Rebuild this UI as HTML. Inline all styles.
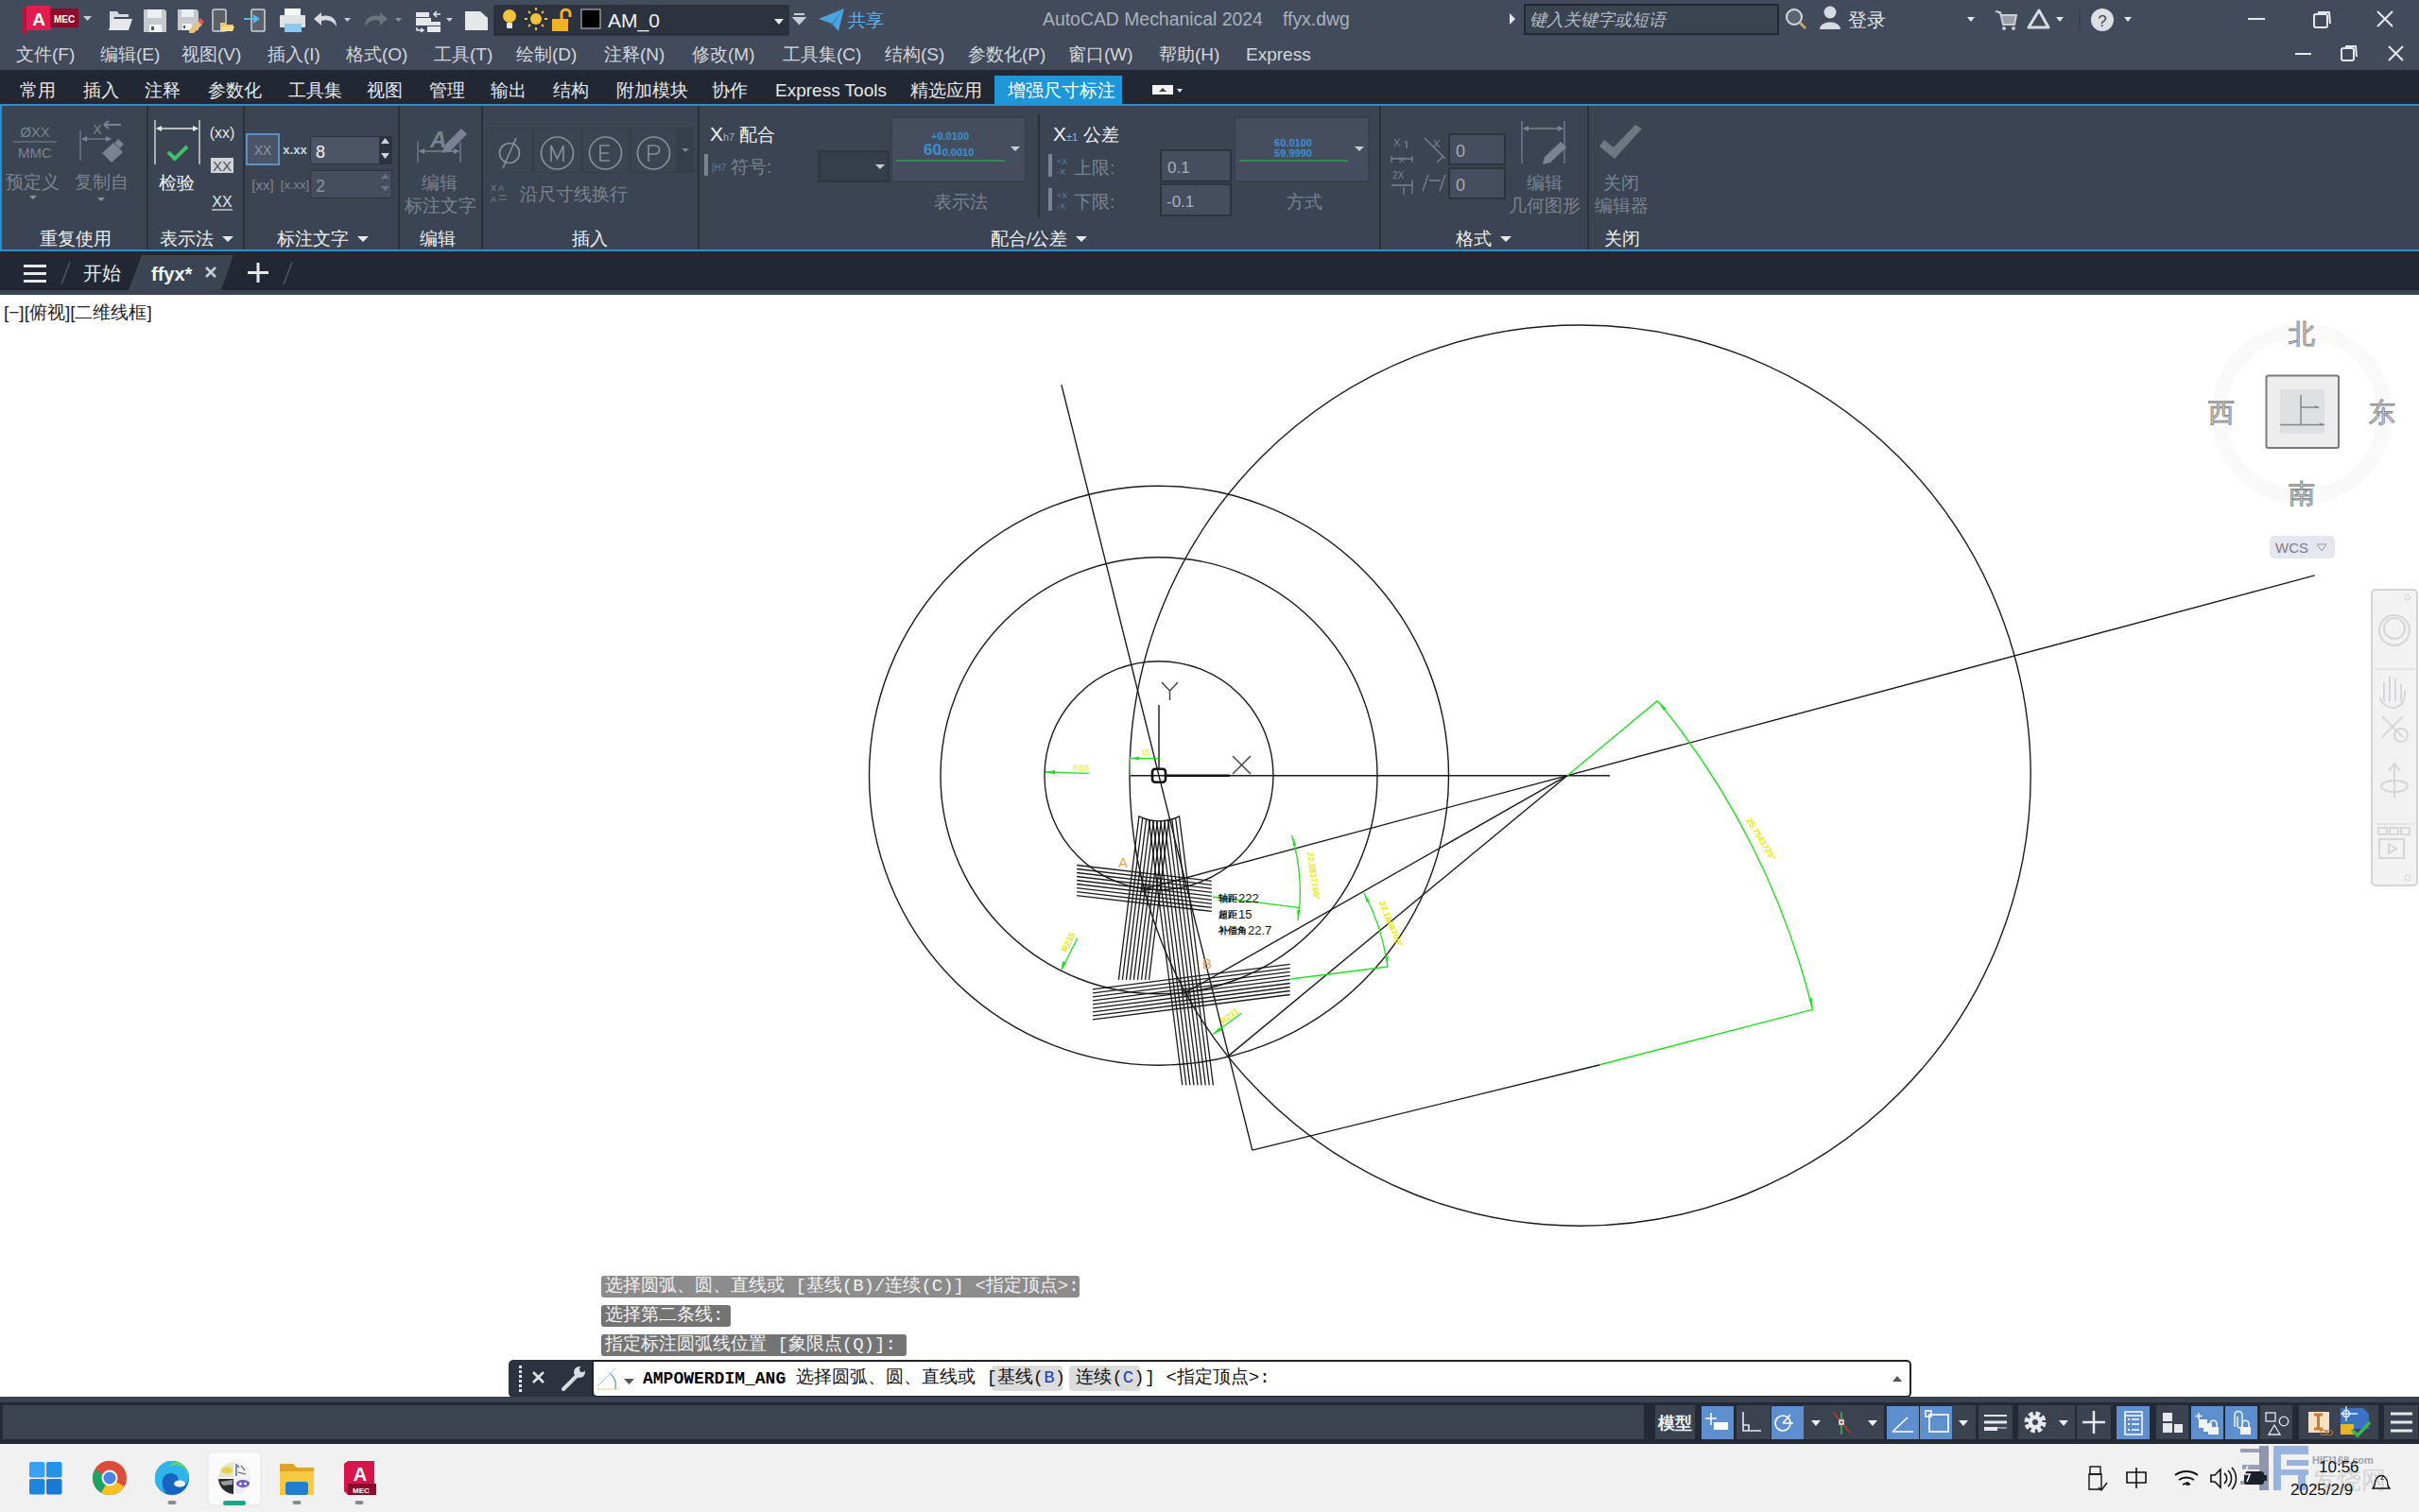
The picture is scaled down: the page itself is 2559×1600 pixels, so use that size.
<!DOCTYPE html>
<html><head><meta charset="utf-8">
<style>
*{box-sizing:border-box;margin:0;padding:0}
html,body{width:2559px;height:1600px;overflow:hidden;background:#fff;font-family:"Liberation Sans",sans-serif}
.a{position:absolute}
.t{position:absolute;white-space:nowrap;line-height:1}
#title{left:0;top:0;width:2559px;height:74px;background:#424b5b}
#rtabs{left:0;top:74px;width:2559px;height:36px;background:#222833}
#ribbon{left:0;top:110px;width:2559px;height:156px;background:#3b4452;border-top:2px solid #2a8fcf;border-bottom:2px solid #2a8fcf;border-left:2px solid #2a8fcf}
#ftabs{left:0;top:266px;width:2559px;height:41px;background:#222833}
#fstrip{left:0;top:307px;width:2559px;height:5px;background:#3b4452}
#status{left:0;top:1478px;width:2559px;height:50px;background:#242a35}
#task{left:0;top:1528px;width:2559px;height:72px;background:#f1f1f1}
.menu{color:#d3d7dd;font-size:19px;top:48px;font-weight:300}
.rt{color:#e6e9ee;font-size:19px;top:86px;font-weight:300}
.pt{color:#eef0f3;font-size:19px;top:243px}
.gray{color:#7f8896}
.sep{position:absolute;top:112px;width:2px;height:152px;background:#2b313b}
</style></head><body>
<div id="title" class="a"></div>
<div id="rtabs" class="a"></div>
<div id="ribbon" class="a"></div>
<div id="ftabs" class="a"></div>
<div id="fstrip" class="a"></div>
<div id="status" class="a"></div>
<div id="task" class="a"></div>


<svg class="a" style="left:0;top:312px" width="2559" height="1166" viewBox="0 312 2559 1166">
<circle cx="1226" cy="820.7" r="121" fill="none" stroke="#1b1b1b" stroke-width="1.4"/>
<circle cx="1226" cy="820.7" r="231" fill="none" stroke="#1b1b1b" stroke-width="1.4"/>
<circle cx="1226" cy="820.7" r="306.5" fill="none" stroke="#1b1b1b" stroke-width="1.4"/>
<circle cx="1671.6" cy="820.6" r="476.6" fill="none" stroke="#1b1b1b" stroke-width="1.4"/>
<line x1="1195.6" y1="820.7" x2="1703.0" y2="820.7" stroke="#1b1b1b" stroke-width="1.4"/>
<line x1="1122.9" y1="407.2" x2="1324.8" y2="1217.1" stroke="#1b1b1b" stroke-width="1.4"/>
<line x1="1211.0" y1="940.5" x2="2448.8" y2="608.9" stroke="#1b1b1b" stroke-width="1.4"/>
<line x1="1658.0" y1="820.7" x2="1254.6" y2="1050.0" stroke="#1b1b1b" stroke-width="1.4"/>
<line x1="1658.0" y1="820.7" x2="1299.8" y2="1117.1" stroke="#1b1b1b" stroke-width="1.4"/>
<line x1="1324.8" y1="1217.1" x2="1692.6" y2="1126.7" stroke="#1b1b1b" stroke-width="1.4"/>
<line x1="1692.6" y1="1126.7" x2="1917.5" y2="1068.4" stroke="#22dd22" stroke-width="1.4"/>
<line x1="1658.0" y1="820.7" x2="1753.4" y2="741.6" stroke="#22dd22" stroke-width="1.4"/>
<path d="M1753.4 741.6 A823.5 823.5 0 0 1 1917.5 1068.4" fill="none" stroke="#22dd22" stroke-width="1.4"/>
<line x1="1183.4" y1="1036.8" x2="1204.9" y2="863.8" stroke="#1b1b1b" stroke-width="1.3"/>
<line x1="1187.4" y1="1036.8" x2="1208.7" y2="865.5" stroke="#1b1b1b" stroke-width="1.3"/>
<line x1="1191.4" y1="1036.8" x2="1212.6" y2="866.8" stroke="#1b1b1b" stroke-width="1.3"/>
<line x1="1195.4" y1="1036.8" x2="1216.5" y2="867.7" stroke="#1b1b1b" stroke-width="1.3"/>
<line x1="1199.4" y1="1036.8" x2="1220.4" y2="868.4" stroke="#1b1b1b" stroke-width="1.3"/>
<line x1="1203.5" y1="1036.8" x2="1224.4" y2="868.7" stroke="#1b1b1b" stroke-width="1.3"/>
<line x1="1207.5" y1="1036.8" x2="1228.4" y2="868.6" stroke="#1b1b1b" stroke-width="1.3"/>
<line x1="1211.5" y1="1036.8" x2="1232.4" y2="868.3" stroke="#1b1b1b" stroke-width="1.3"/>
<line x1="1215.5" y1="1036.8" x2="1236.5" y2="867.5" stroke="#1b1b1b" stroke-width="1.3"/>
<line x1="1250.8" y1="1148.3" x2="1215.4" y2="867.5" stroke="#1b1b1b" stroke-width="1.3"/>
<line x1="1254.9" y1="1148.3" x2="1219.6" y2="868.3" stroke="#1b1b1b" stroke-width="1.3"/>
<line x1="1258.9" y1="1148.3" x2="1223.7" y2="868.6" stroke="#1b1b1b" stroke-width="1.3"/>
<line x1="1263.0" y1="1148.3" x2="1227.8" y2="868.7" stroke="#1b1b1b" stroke-width="1.3"/>
<line x1="1267.1" y1="1148.3" x2="1231.8" y2="868.3" stroke="#1b1b1b" stroke-width="1.3"/>
<line x1="1271.1" y1="1148.3" x2="1235.8" y2="867.7" stroke="#1b1b1b" stroke-width="1.3"/>
<line x1="1275.2" y1="1148.3" x2="1239.7" y2="866.7" stroke="#1b1b1b" stroke-width="1.3"/>
<line x1="1279.3" y1="1148.3" x2="1243.6" y2="865.3" stroke="#1b1b1b" stroke-width="1.3"/>
<line x1="1283.4" y1="1148.3" x2="1247.5" y2="863.6" stroke="#1b1b1b" stroke-width="1.3"/>
<path d="M1204.4 863.6 A48 48 0 0 0 1248 863.6" fill="none" stroke="#1b1b1b" stroke-width="1.3"/>
<line x1="1139.1" y1="915.5" x2="1281.8" y2="932.3" stroke="#1b1b1b" stroke-width="1.3"/>
<line x1="1139.1" y1="919.5" x2="1281.8" y2="936.3" stroke="#1b1b1b" stroke-width="1.3"/>
<line x1="1139.1" y1="923.5" x2="1281.8" y2="940.3" stroke="#1b1b1b" stroke-width="1.3"/>
<line x1="1139.1" y1="927.5" x2="1281.8" y2="944.3" stroke="#1b1b1b" stroke-width="1.3"/>
<line x1="1139.1" y1="931.5" x2="1281.8" y2="948.3" stroke="#1b1b1b" stroke-width="1.3"/>
<line x1="1139.1" y1="935.5" x2="1281.8" y2="952.3" stroke="#1b1b1b" stroke-width="1.3"/>
<line x1="1139.1" y1="939.6" x2="1281.8" y2="956.3" stroke="#1b1b1b" stroke-width="1.3"/>
<line x1="1139.1" y1="943.6" x2="1281.8" y2="960.4" stroke="#1b1b1b" stroke-width="1.3"/>
<line x1="1139.1" y1="947.6" x2="1281.8" y2="964.4" stroke="#1b1b1b" stroke-width="1.3"/>
<line x1="1156.0" y1="1046.9" x2="1364.7" y2="1020.4" stroke="#1b1b1b" stroke-width="1.3"/>
<line x1="1156.0" y1="1050.9" x2="1364.7" y2="1024.4" stroke="#1b1b1b" stroke-width="1.3"/>
<line x1="1156.0" y1="1054.9" x2="1364.7" y2="1028.4" stroke="#1b1b1b" stroke-width="1.3"/>
<line x1="1156.0" y1="1058.9" x2="1364.7" y2="1032.4" stroke="#1b1b1b" stroke-width="1.3"/>
<line x1="1156.0" y1="1062.9" x2="1364.7" y2="1036.4" stroke="#1b1b1b" stroke-width="1.3"/>
<line x1="1156.0" y1="1066.9" x2="1364.7" y2="1040.5" stroke="#1b1b1b" stroke-width="1.3"/>
<line x1="1156.0" y1="1070.9" x2="1364.7" y2="1044.5" stroke="#1b1b1b" stroke-width="1.3"/>
<line x1="1156.0" y1="1074.9" x2="1364.7" y2="1048.5" stroke="#1b1b1b" stroke-width="1.3"/>
<line x1="1156.0" y1="1078.9" x2="1364.7" y2="1052.5" stroke="#1b1b1b" stroke-width="1.3"/>
<circle cx="1211" cy="939.5" r="3.5" fill="none" stroke="#1b1b1b" stroke-width="1"/>
<line x1="1208.5" y1="937.0" x2="1213.5" y2="942.0" stroke="#1b1b1b" stroke-width="0.8"/>
<line x1="1208.5" y1="942.0" x2="1213.5" y2="937.0" stroke="#1b1b1b" stroke-width="0.8"/>
<circle cx="1254.6" cy="1050" r="3.5" fill="none" stroke="#1b1b1b" stroke-width="1"/>
<line x1="1252.1" y1="1047.5" x2="1257.1" y2="1052.5" stroke="#1b1b1b" stroke-width="0.8"/>
<line x1="1252.1" y1="1052.5" x2="1257.1" y2="1047.5" stroke="#1b1b1b" stroke-width="0.8"/>
<rect x="1219" y="813.7" width="14" height="14" rx="3" fill="none" stroke="#111" stroke-width="2.6"/>
<line x1="1226.0" y1="746.0" x2="1226.0" y2="813.0" stroke="#333" stroke-width="1.6"/>
<line x1="1233.0" y1="820.7" x2="1301.0" y2="820.7" stroke="#111" stroke-width="2.4"/>
<path d="M1229 722 L1237.5 731 L1246 722 M1237.5 731 L1237.5 741" fill="none" stroke="#444" stroke-width="1.5"/>
<path d="M1304 800 L1323 819 M1323 800 L1304 819" fill="none" stroke="#444" stroke-width="1.5"/>
<line x1="1106.0" y1="817.0" x2="1151.7" y2="818.4" stroke="#22dd22" stroke-width="1.3"/>
<path d="M1106 817 L1116 815 L1116 819.5 Z" fill="#22dd22"/>
<text x="1135" y="815.5" font-size="9" fill="#e8e800" font-family="Liberation Sans">R60</text>
<line x1="1195.6" y1="801.0" x2="1195.6" y2="820.7" stroke="#22dd22" stroke-width="1.3"/>
<line x1="1195.6" y1="802.5" x2="1226.0" y2="802.5" stroke="#22dd22" stroke-width="1.3"/>
<path d="M1196 802.5 L1205 800.5 L1205 804.5 Z" fill="#22dd22"/>
<text x="1207" y="799" font-size="9" fill="#e8e800" font-family="Liberation Sans">15</text>
<line x1="1283.0" y1="949.0" x2="1375.0" y2="960.6" stroke="#22dd22" stroke-width="1.3"/>
<path d="M1366.6 884 Q1380 930 1373 974" fill="none" stroke="#22dd22" stroke-width="1.3"/>
<text x="0" y="0" font-size="9" font-weight="bold" fill="#e8e800" font-family="Liberation Sans" transform="translate(1383 902) rotate(82)">22.0837760°</text>
<line x1="1365.5" y1="1036.0" x2="1468.0" y2="1023.0" stroke="#22dd22" stroke-width="1.3"/>
<path d="M1442.7 944.8 Q1462 980 1468 1023" fill="none" stroke="#22dd22" stroke-width="1.3"/>
<text x="0" y="0" font-size="9" font-weight="bold" fill="#e8e800" font-family="Liberation Sans" transform="translate(1459 955) rotate(68)">22.1808700°</text>
<line x1="1139.7" y1="992.8" x2="1122.5" y2="1027.2" stroke="#22dd22" stroke-width="1.3"/>
<path d="M1122.5 1027.2 L1124 1017 L1128 1019 Z" fill="#22dd22"/>
<text x="0" y="0" font-size="9" font-weight="bold" fill="#e8e800" font-family="Liberation Sans" transform="translate(1128 1008) rotate(-63)">R235</text>
<line x1="1313.3" y1="1072.2" x2="1283.2" y2="1094.4" stroke="#22dd22" stroke-width="1.3"/>
<path d="M1283.2 1094.4 L1290 1087 L1292.5 1090.5 Z" fill="#22dd22"/>
<text x="0" y="0" font-size="9" font-weight="bold" fill="#e8e800" font-family="Liberation Sans" transform="translate(1294 1084) rotate(-36)">R231</text>
<text x="0" y="0" font-size="9" font-weight="bold" fill="#e8e800" font-family="Liberation Sans" transform="translate(1847 868) rotate(58)">25.7543720°</text>
<path d="M1367.5 886.0 L1371.4 894.3 L1367.9 895.2 Z" fill="#22dd22"/>
<path d="M1372.8 972.0 L1372.1 962.8 L1375.7 963.3 Z" fill="#22dd22"/>
<path d="M1443.5 946.0 L1448.8 953.5 L1445.6 954.9 Z" fill="#22dd22"/>
<path d="M1467.8 1021.0 L1465.1 1012.2 L1468.7 1011.9 Z" fill="#22dd22"/>
<path d="M1755.0 743.0 L1762.7 749.7 L1759.8 751.9 Z" fill="#22dd22"/>
<path d="M1917.3 1066.5 L1913.6 1057.0 L1917.1 1056.3 Z" fill="#22dd22"/>
<text x="1183" y="918" font-size="15" fill="#e7a14a" font-family="Liberation Sans">A</text>
<text x="1272" y="1025" font-size="15" fill="#e7a14a" font-family="Liberation Sans">B</text>
<text x="1289" y="954" font-size="10" font-weight="bold" fill="#111">轴距</text><text x="1310" y="955" font-size="13" fill="#111" font-family="Liberation Sans">222</text>
<text x="1289" y="971" font-size="10" font-weight="bold" fill="#111">超距</text><text x="1310" y="972" font-size="13" fill="#111" font-family="Liberation Sans">15</text>
<text x="1289" y="988" font-size="10" font-weight="bold" fill="#111">补偿角</text><text x="1320" y="989" font-size="13" fill="#111" font-family="Liberation Sans">22.7</text>
</svg>
<!-- title bar content -->
<svg class="a" style="left:0;top:0" width="1000" height="40" viewBox="0 0 1000 40">
  <path d="M24 9 L30 6 L30 34 L24 36 Z" fill="#b0173f"/>
  <rect x="28" y="6" width="26" height="26" fill="#e31b4f"/>
  <rect x="53" y="9" width="30" height="20" fill="#8e0d2e"/>
  <text x="41" y="27" font-family="Liberation Sans" font-weight="bold" font-size="19" fill="#fff" text-anchor="middle">A</text>
  <text x="68" y="24" font-family="Liberation Sans" font-weight="bold" font-size="10" fill="#fff" text-anchor="middle">MEC</text>
  <path d="M88 17 L97 17 L92.5 22 Z" fill="#c9ced6"/>
  <!-- open -->
  <path d="M116 12 L124 12 L126 15 L136 15 L136 18 L121 18 L116 32 Z" fill="#d7dadf"/>
  <path d="M119 20 L140 20 L136 32 L115 32 Z" fill="#e6e8eb"/>
  <!-- save -->
  <path d="M152 10 L174 10 L176 12 L176 34 L152 34 Z" fill="#c6c9ce"/>
  <rect x="156" y="10" width="15" height="9" fill="#eceef0"/>
  <rect x="158" y="26" width="13" height="8" fill="#f4f5f6"/>
  <rect x="160" y="28" width="3" height="4" fill="#555"/>
  <!-- save as -->
  <path d="M188 10 L208 10 L210 12 L210 32 L188 32 Z" fill="#c6c9ce"/>
  <rect x="192" y="10" width="13" height="8" fill="#eceef0"/>
  <rect x="193" y="25" width="10" height="7" fill="#f4f5f6"/>
  <rect x="194" y="27" width="2" height="3" fill="#555"/>
  <path d="M200 32 L209 22 L214 26 L205 35 L200 35 Z" fill="#e6c27a"/>
  <path d="M209 22 L212 19 L216 23 L213 26 Z" fill="#e05a5a"/>
  <!-- phone folder -->
  <rect x="225" y="10" width="14" height="23" rx="1.5" fill="#5c6068" stroke="#d0d3d8" stroke-width="1.5"/>
  <path d="M233 24 L238 24 L240 26 L247 26 L246 33 L233 33 Z" fill="#f0c860"/>
  <path d="M235 28 L248 28 L246 33 L233 33 Z" fill="#f6dc8c"/>
  <!-- import -->
  <rect x="266" y="10" width="14" height="23" rx="1.5" fill="#5c6068" stroke="#d0d3d8" stroke-width="1.5"/>
  <path d="M258 19 L268 19 L268 15 L275 20 L268 25 L268 21 L258 21 Z" fill="#5fb6e8"/>
  <!-- print -->
  <rect x="301" y="9" width="17" height="8" fill="#f4f5f6"/>
  <rect x="296" y="16" width="27" height="13" rx="1" fill="#e0e2e5"/>
  <rect x="301" y="25" width="18" height="9" fill="#8cc8f2"/>
  <!-- undo -->
  <path d="M356 28 C356 18 348 15 340 17 L340 13 L332 20 L340 27 L340 22 C347 20 352 22 356 28 Z" fill="#d6d9de"/>
  <path d="M364 19 L371 19 L367.5 23 Z" fill="#c9ced6"/>
  <!-- redo -->
  <path d="M386 28 C386 18 394 15 402 17 L402 13 L410 20 L402 27 L402 22 C395 20 390 22 386 28 Z" fill="#6c7480"/>
  <path d="M418 19 L425 19 L421.5 23 Z" fill="#8a919b"/>
  <!-- workspace -->
  <rect x="440" y="13" width="14" height="5" fill="#e6e8eb"/>
  <rect x="440" y="19" width="16" height="8" fill="#e6e8eb"/>
  <rect x="452" y="23" width="14" height="4" fill="#e6e8eb"/>
  <rect x="452" y="28" width="14" height="6" fill="#e6e8eb"/>
  <path d="M466 15 L460 15 M462 12 L459 15 L462 18 M441 29 L441 32 L448 32 M445 30 L448 32 L445 34" stroke="#e6e8eb" stroke-width="1.5" fill="none"/>
  <path d="M472 19 L479 19 L475.5 23 Z" fill="#c9ced6"/>
  <!-- page -->
  <path d="M492 12 L508 12 L516 19 L516 32 L492 32 Z" fill="#e5e7ea"/>
  <!-- layer box -->
  <rect x="523" y="6" width="311" height="31" fill="#2c333e" stroke="#222831" stroke-width="1"/>
  <circle cx="539" cy="17" r="7" fill="#f2c23a"/>
  <rect x="536" y="24" width="6" height="6" rx="1" fill="#e8e8e8"/>
  <circle cx="567" cy="20" r="6" fill="#f2c23a"/>
  <g stroke="#f2c23a" stroke-width="2"><line x1="567" y1="8" x2="567" y2="11"/><line x1="567" y1="29" x2="567" y2="32"/><line x1="555" y1="20" x2="558" y2="20"/><line x1="576" y1="20" x2="579" y2="20"/><line x1="559" y1="12" x2="561" y2="14"/><line x1="573" y1="26" x2="575" y2="28"/><line x1="575" y1="12" x2="573" y2="14"/><line x1="559" y1="28" x2="561" y2="26"/></g>
  <rect x="584" y="20" width="17" height="13" fill="#f2b12a"/>
  <path d="M594 20 L594 14 C594 9 603 9 603 14 L603 18" stroke="#f2b12a" stroke-width="3" fill="none"/>
  <rect x="615" y="10" width="20" height="20" fill="#000" stroke="#c9ced6" stroke-width="1"/>
  <text x="643" y="29" font-family="Liberation Sans" font-size="21" fill="#f0f2f5">AM_0</text>
  <path d="M819 20 L829 20 L824 26 Z" fill="#e6e8eb"/>
  <path d="M840 15 L851 15 M840 19 L851 19 L845.5 25 Z" stroke="#c9ced6" stroke-width="2" fill="#c9ced6"/>
  <!-- share -->
  <path d="M866 20 L893 9 L887 33 L880 25 Z" fill="#4aa3df"/>
  <path d="M880 25 L893 9 L878 30 Z" fill="#2b7fc0"/>
  <text x="897" y="28" font-family="Liberation Sans" font-size="19" fill="#5db2ea">共享</text>
</svg>
<div class="t" style="left:1103px;top:11px;font-size:19.4px;color:#a9b1bd">AutoCAD Mechanical 2024</div><div class="t" style="left:1357px;top:11px;font-size:19.4px;color:#a9b1bd">ffyx.dwg</div>
<svg class="a" style="left:1590px;top:0" width="969" height="74" viewBox="1590 0 969 74">
  <path d="M1597 14 L1603 20 L1597 26 Z" fill="#e6e8eb"/>
  <rect x="1613" y="5" width="268" height="31" fill="#3a4350" stroke="#222831" stroke-width="2"/>
  <text x="1618" y="27" font-family="Liberation Sans" font-style="italic" font-size="18" fill="#b5bcc6">键入关键字或短语</text>
  <circle cx="1898" cy="18" r="8" fill="#5b6472" stroke="#d8dbe0" stroke-width="2"/>
  <line x1="1904" y1="24" x2="1910" y2="30" stroke="#c7a36a" stroke-width="3"/>
  <circle cx="1936" cy="13" r="6.5" fill="#d8dbe0"/>
  <path d="M1925 31 C1925 21 1947 21 1947 31 Z" fill="#d8dbe0"/>
  <text x="1955" y="28" font-family="Liberation Sans" font-size="20" fill="#e6e8eb">登录</text>
  <path d="M2081 18 L2089 18 L2085 23 Z" fill="#e6e8eb"/>
  <path d="M2111 12 L2116 13 L2119 26 L2131 26 L2133 16 L2117 16" stroke="#c9ced6" stroke-width="2" fill="#9aa0a8"/>
  <circle cx="2120" cy="30" r="2" fill="#c9ced6"/><circle cx="2130" cy="30" r="2" fill="#c9ced6"/>
  <path d="M2157 11 L2146 29 L2167 29 Z" stroke="#d8dbe0" stroke-width="3" fill="none" stroke-linejoin="round"/>
  <path d="M2175 18 L2183 18 L2179 23 Z" fill="#e6e8eb"/>
  <line x1="2200" y1="9" x2="2200" y2="33" stroke="#353d4a" stroke-width="1"/>
  <circle cx="2224" cy="21" r="12" fill="#dcdfe3"/>
  <text x="2224" y="28" font-family="Liberation Sans" font-size="17" fill="#3e4756" text-anchor="middle">?</text>
  <path d="M2247 18 L2255 18 L2251 23 Z" fill="#e6e8eb"/>
  <line x1="2378" y1="20" x2="2396" y2="20" stroke="#e6e8eb" stroke-width="2"/>
  <rect x="2448" y="15" width="14" height="14" rx="2" fill="none" stroke="#e6e8eb" stroke-width="2"/>
  <path d="M2452 13 L2464 13 L2465 25" fill="none" stroke="#e6e8eb" stroke-width="2"/>
  <path d="M2515 12 L2531 28 M2531 12 L2515 28" stroke="#e6e8eb" stroke-width="2"/>
  <line x1="2428" y1="57" x2="2445" y2="57" stroke="#e6e8eb" stroke-width="2"/>
  <rect x="2477" y="51" width="13" height="13" rx="2" fill="none" stroke="#e6e8eb" stroke-width="2"/>
  <path d="M2481 49 L2492 49 L2493 60" fill="none" stroke="#e6e8eb" stroke-width="2"/>
  <path d="M2527 49 L2542 64 M2542 49 L2527 64" stroke="#e6e8eb" stroke-width="2"/>
</svg>
<!-- ribbon tab icon -->
<div class="a" style="left:1219px;top:90px;width:22px;height:10px;background:#f2f2f2"></div>
<svg class="a" style="left:1219px;top:88px" width="40" height="16"><path d="M7 9 L11 5 L15 9 Z" fill="#444"/><path d="M26 6 L32 6 L29 10 Z" fill="#e6e8eb"/></svg>


<!-- viewcube -->
<svg class="a" style="left:2300px;top:312px" width="259" height="640" viewBox="2300 312 259 640" font-family="Liberation Sans">
  <circle cx="2435" cy="438" r="88" fill="none" stroke="#f9f9fa" stroke-width="16"/>
  <rect x="2397.5" y="397.5" width="76.5" height="76.5" rx="2" fill="#ededed" stroke="#7a7a7e" stroke-width="2"/>
  <rect x="2412" y="412" width="47" height="47" fill="#dfe0e3"/>
  <path d="M2434 418 L2434 449 M2434 431 L2453 431 M2412 449.5 L2459 449.5" stroke="#85858a" stroke-width="1.5" fill="none"/><path d="M2449 429 L2454 431 L2449 432 Z M2454 447.5 L2460 449.5 L2454 450.5 Z" fill="#85858a"/>
  <text x="2435" y="363" font-size="28" fill="#d7d7da" stroke="#8a8a8e" stroke-width="1" text-anchor="middle">北</text>
  <text x="2350" y="446" font-size="28" fill="#d7d7da" stroke="#8a8a8e" stroke-width="1" text-anchor="middle">西</text>
  <text x="2520" y="446" font-size="28" fill="#d7d7da" stroke="#8a8a8e" stroke-width="1" text-anchor="middle">东</text>
  <text x="2435" y="532" font-size="28" fill="#d7d7da" stroke="#8a8a8e" stroke-width="1" text-anchor="middle">南</text>
  <rect x="2401" y="567" width="69" height="24" rx="5" fill="#e6e6f0"/>
  <text x="2407" y="585" font-size="15" fill="#7d7d86">WCS</text>
  <path d="M2451 576 L2461 576 L2456 583 Z" fill="none" stroke="#9c9ca4" stroke-width="1"/>
  <rect x="2509" y="624" width="48" height="313" rx="4" fill="#f2f2f3" stroke="#c8c8cc" stroke-width="1.5"/>
  <circle cx="2547" cy="632" r="3" fill="none" stroke="#d4d4d8" stroke-width="1"/>
  <circle cx="2547" cy="929" r="3" fill="none" stroke="#d4d4d8" stroke-width="1"/>
  <g fill="none" stroke="#d6d6da" stroke-width="2">
    <circle cx="2533" cy="667" r="16"/><circle cx="2533" cy="665" r="11"/>
    <line x1="2512" y1="708" x2="2554" y2="708" stroke-width="1"/>
    <path d="M2522 742 L2522 722 M2528 742 L2528 716 M2534 742 L2534 718 M2540 742 L2540 724 M2518 738 C2520 752 2546 756 2544 730"/>
    <path d="M2520 758 L2542 780 M2542 758 L2520 780"/><circle cx="2540" cy="778" r="7"/>
    <path d="M2533 810 L2533 844 M2527 816 L2533 808 L2539 816"/><ellipse cx="2533" cy="832" rx="14" ry="6"/>
    <line x1="2512" y1="872" x2="2554" y2="872" stroke-width="1"/>
    <rect x="2516" y="876" width="9" height="7"/><rect x="2528" y="876" width="9" height="7"/><rect x="2540" y="876" width="9" height="7"/>
    <rect x="2517" y="888" width="26" height="20"/><path d="M2527 893 L2535 898 L2527 903 Z"/>
  </g>
</svg>

<!-- command history -->
<div class="a" style="left:636px;top:1350px;width:506px;height:23px;background:#8c8c8c;border-radius:3px"></div>
<div class="a" style="left:636px;top:1381px;width:137px;height:23px;background:#747474;border-radius:3px"></div>
<div class="a" style="left:636px;top:1412px;width:323px;height:23px;background:#747474;border-radius:3px"></div>
<div class="t" style="left:640px;top:1352px;font-size:19px;color:#f2f2f2;font-family:'Liberation Mono',monospace">选择圆弧、圆、直线或 [基线(B)/连续(C)] &lt;指定顶点&gt;:</div>
<div class="t" style="left:640px;top:1383px;font-size:19px;color:#f2f2f2;font-family:'Liberation Mono',monospace">选择第二条线:</div>
<div class="t" style="left:640px;top:1414px;font-size:19px;color:#f2f2f2;font-family:'Liberation Mono',monospace">指定标注圆弧线位置 [象限点(Q)]:</div>

<!-- command input -->
<div class="a" style="left:538px;top:1439px;width:92px;height:40px;background:#2c333f;border-radius:5px 0 0 5px"></div>
<div class="a" style="left:626px;top:1439px;width:1396px;height:40px;background:#fff;border:2px solid #1e232b;border-radius:0 5px 5px 6px"></div>
<svg class="a" style="left:538px;top:1439px" width="140" height="40" viewBox="538 1439 140 40">
  <g fill="#e6e8eb"><rect x="549" y="1465" width="3" height="3"/><rect x="549" y="1460" width="3" height="3"/><rect x="549" y="1455" width="3" height="3"/><rect x="549" y="1450" width="3" height="3"/><rect x="549" y="1445" width="3" height="3"/><rect x="549" y="1470" width="3" height="3"/></g>
  <path d="M564 1452 L575 1463 M575 1452 L564 1463" stroke="#e0e3e7" stroke-width="2.5"/>
  <path d="M596 1470 L610 1456" stroke="#d8dbe0" stroke-width="4" stroke-linecap="round"/>
  <circle cx="613" cy="1452" r="6" fill="#d8dbe0"/><circle cx="616" cy="1449" r="3" fill="#2c333f"/>
  <line x1="632" y1="1470" x2="655" y2="1470" stroke="#f2c98a" stroke-width="1"/>
  <line x1="632" y1="1467" x2="651" y2="1448" stroke="#9fc7ea" stroke-width="1"/>
  <path d="M646 1454 Q653 1460 651 1470" fill="none" stroke="#5aa0d8" stroke-width="1.3"/>
  <path d="M660 1459 L671 1459 L665.5 1465 Z" fill="#555"/>
</svg>
<div class="t" style="left:680px;top:1450px;font-size:18px;color:#000;font-family:'Liberation Mono',monospace;font-weight:bold">AMPOWERDIM_ANG</div>
<div class="a" style="left:1049px;top:1445px;width:75px;height:27px;background:#dcdcdc;border-radius:4px"></div>
<div class="a" style="left:1131px;top:1445px;width:75px;height:27px;background:#dcdcdc;border-radius:4px"></div>
<div class="t" style="left:842px;top:1449px;font-size:19px;color:#111;font-family:'Liberation Mono',monospace">选择圆弧、圆、直线或 [基线(<span style="color:#1a3fbf">B</span>) 连续(<span style="color:#1a3fbf">C</span>)] &lt;指定顶点&gt;:</div>
<svg class="a" style="left:1998px;top:1452px" width="20" height="14"><path d="M4 10 L14 10 L9 4 Z" fill="#555"/></svg>

<!-- status bar -->
<div class="a" style="left:0;top:1478px;width:2559px;height:6px;background:#3b4351"></div>
<div class="a" style="left:3px;top:1487px;width:1736px;height:36px;background:#3b4351"></div>
<svg class="a" style="left:1745px;top:1487px" width="814" height="36" viewBox="1745 1487 814 36" font-family="Liberation Sans">
  <g fill="#3b4351">
    <rect x="1751" y="0" width="42" height="36" transform="translate(0 1487)"/>
    <rect x="1837" y="1487" width="36" height="36"/><rect x="1907" y="1487" width="86" height="36"/>
    <rect x="2065" y="1487" width="25" height="36"/><rect x="2093" y="1487" width="36" height="36"/>
    <rect x="2135" y="1487" width="60" height="36"/><rect x="2197" y="1487" width="36" height="36"/>
    <rect x="2281" y="1487" width="34" height="36"/><rect x="2391" y="1487" width="34" height="36"/>
    <rect x="2432" y="1487" width="84" height="36"/><rect x="2522" y="1487" width="36" height="36"/>
  </g>
  <g fill="#5d8fce">
    <rect x="1800" y="1488" width="34" height="35"/><rect x="1874" y="1488" width="34" height="35"/>
    <rect x="1996" y="1488" width="34" height="35"/><rect x="2031" y="1488" width="34" height="35"/>
    <rect x="2239" y="1488" width="35" height="35"/><rect x="2318" y="1488" width="34" height="35"/>
    <rect x="2354" y="1488" width="34" height="35"/>
  </g>
  <text x="1754" y="1512" font-size="18" font-weight="bold" fill="#f0f2f5">模型</text>
  <g stroke="#fff" stroke-width="1.6" fill="none">
    <path d="M1810 1495 L1810 1508 M1804 1501 L1816 1501"/>
    <path d="M1844 1494 L1844 1514 L1863 1514 M1844 1508 L1850 1508 L1850 1514" stroke="#e6e8eb"/>
    <circle cx="1886" cy="1506" r="8"/><path d="M1886 1506 L1894 1497 M1886 1506 L1897 1506"/>
    <path d="M1948 1494 L1948 1518" stroke="#4caf50"/><path d="M1939 1494 L1957 1516" stroke="#c0392b"/><rect x="1946" y="1503" width="4" height="4" stroke="#e6e8eb"/>
    <path d="M2002 1515 L2024 1515 M2002 1515 L2018 1500"/>
    <rect x="2041" y="1497" width="20" height="18"/><rect x="2037" y="1493" width="6" height="6"/>
    <path d="M2099 1498 L2123 1498" stroke="#e6e8eb" stroke-width="2"/><path d="M2099 1505 L2123 1505" stroke="#e6e8eb" stroke-width="3"/><path d="M2099 1512 L2113 1512" stroke="#e6e8eb" stroke-width="4"/><path d="M2113 1511 L2123 1511" stroke="#e6e8eb" stroke-width="1"/>
    <path d="M2203 1505 L2227 1505 M2215 1493 L2215 1517" stroke="#e6e8eb" stroke-width="2.5"/>
    <rect x="2248" y="1494" width="18" height="24" stroke="#fff" stroke-width="1.5"/><path d="M2248 1498 L2266 1498" stroke-width="1.5"/><path d="M2255 1502 L2263 1502 M2255 1507 L2263 1507 M2255 1513 L2263 1513" stroke-width="1.3"/><path d="M2251 1502 L2253 1502 M2251 1507 L2253 1507 M2251 1513 L2253 1513" stroke-width="2"/>
    <rect x="2397" y="1495" width="10" height="9" stroke="#e6e8eb" stroke-width="1.3"/><circle cx="2416" cy="1504" r="4.8" stroke="#e6e8eb" stroke-width="1.3"/><path d="M2406 1508 L2400 1518 L2412 1518 Z" stroke="#e6e8eb" stroke-width="1.3"/>
    <path d="M2529 1496 L2552 1496 M2529 1505 L2552 1505 M2529 1514 L2552 1514" stroke="#e6e8eb" stroke-width="3"/>
  </g>
  <g fill="#fff"><rect x="1813" y="1505" width="15" height="8"/><rect x="2288" y="1495" width="10" height="9" fill="#e6e8eb"/><rect x="2288" y="1506" width="10" height="10" fill="#e6e8eb"/><rect x="2300" y="1507" width="9" height="9" fill="#e6e8eb"/></g>
  <g fill="#f0f2f5">
    <path d="M1916 1503 L1926 1503 L1921 1509 Z M1976 1503 L1986 1503 L1981 1509 Z M2072 1503 L2082 1503 L2077 1509 Z M2178 1503 L2188 1503 L2183 1509 Z" />
    <circle cx="2153" cy="1505" r="8.5" fill="none" stroke="#e6e8eb" stroke-width="6" stroke-dasharray="4.2 2.5"/>
    <circle cx="2153" cy="1505" r="7.5" fill="#e6e8eb"/>
    <circle cx="2153" cy="1505" r="3" fill="#3b4351"/>
  </g>
  <g fill="#f0f2f5">
    <path d="M2326 1495 L2326 1502 M2322.5 1498.5 L2329.5 1498.5" stroke="#f0f2f5" stroke-width="1.5"/>
    <rect x="2326" y="1502" width="9" height="9"/><rect x="2331" y="1506" width="9" height="9"/>
    <rect x="2336" y="1510" width="11" height="8"/>
    <path d="M2338 1510 L2338 1507 C2338 1502 2345 1502 2345 1507 L2345 1510" stroke="#f0f2f5" stroke-width="1.5" fill="none"/>
    <path d="M2364 1510 L2364 1498 C2364 1492 2372 1492 2372 1498 L2372 1508 C2372 1512 2367 1512 2367 1508 L2367 1499" stroke="#f0f2f5" stroke-width="1.5" fill="none"/>
    <rect x="2370" y="1510" width="11" height="8"/>
    <path d="M2372 1510 L2372 1507 C2372 1502 2379 1502 2379 1507 L2379 1510" stroke="#f0f2f5" stroke-width="1.5" fill="none"/>
  </g>
  <rect x="2442" y="1494" width="22" height="22" fill="#f7e2c8"/>
  <path d="M2448 1497 L2457 1497 M2452.5 1497 L2452.5 1512 M2448 1512 L2457 1512" stroke="#c97a2a" stroke-width="3"/>
  <ellipse cx="2458" cy="1516" rx="3.5" ry="2.5" fill="none" stroke="#b07040" stroke-width="1.2"/><ellipse cx="2464" cy="1516" rx="3.5" ry="2.5" fill="none" stroke="#b07040" stroke-width="1.2"/>
  <path d="M2476 1490 L2500 1490 L2506 1496 L2506 1512 L2476 1512 Z" fill="#3b73c4"/>
  <circle cx="2482" cy="1496" r="3.5" fill="none" stroke="#e8eef8" stroke-width="1.5"/>
  <path d="M2482 1488 L2482 1504 M2476 1496 L2494 1496" stroke="#e8eef8" stroke-width="1.3"/>
  <rect x="2476" y="1507" width="14" height="11" fill="#eab52a"/>
  <path d="M2488 1513 L2494 1519 L2507 1505" stroke="#3cb54a" stroke-width="3.5" fill="none"/>
</svg>

<!-- taskbar -->
<svg class="a" style="left:0;top:1528px" width="2559" height="72" viewBox="0 1528 2559 72" font-family="Liberation Sans">
  <g fill="#1e88e5"><rect x="31" y="1547" width="16.5" height="16.5" rx="2" fill="#3aa0ef"/><rect x="49" y="1547" width="16.5" height="16.5" rx="2" fill="#2591e8"/><rect x="31" y="1565" width="16.5" height="16.5" rx="2" fill="#1f86df"/><rect x="49" y="1565" width="16.5" height="16.5" rx="2" fill="#1879d6"/></g>
  <circle cx="116" cy="1564" r="18" fill="#dd4b39"/>
  <path d="M116 1564 L131.6 1573 A18 18 0 0 1 107 1579.6 Z" fill="#f6c026"/>
  <path d="M116 1564 L107 1579.6 A18 18 0 0 1 100.4 1555 Z" fill="#1ea362"/>
  <path d="M100.4 1555 A18 18 0 0 1 116 1546 L116 1564 Z" fill="#dd4b39"/>
  <circle cx="116" cy="1564" r="8.5" fill="#fff"/><circle cx="116" cy="1564" r="6.5" fill="#4a84e8"/>
  <circle cx="182" cy="1564" r="18" fill="#1565c0"/>
  <path d="M164 1566 A18 18 0 0 1 200 1562 C200 1572 192 1576 186 1572 C190 1568 190 1560 182 1559 C172 1558 168 1570 176 1580 C168 1578 164 1572 164 1566 Z" fill="#2fb5ea"/>
  <path d="M182 1546 A18 18 0 0 1 200 1563 C198 1552 188 1548 178 1552 C184 1546 190 1546 182 1546 Z" fill="#5fd46a"/>
  <ellipse cx="190" cy="1570" rx="6" ry="3.5" fill="#f1f1f1"/>
  <rect x="177.5" y="1588" width="9" height="4" rx="2" fill="#8a8a8a"/>
  <rect x="220" y="1536" width="56" height="57" rx="5" fill="#fafafa" stroke="#e3e3e3" stroke-width="1"/>
  <circle cx="248" cy="1564" r="17" fill="#f2f2f2"/>
  <path d="M247 1547 A17 17 0 0 0 231 1563 L247 1563 Z" fill="#e8e4c8"/>
  <ellipse cx="240" cy="1556" rx="6" ry="3.5" fill="#e6cf4a"/>
  <path d="M250 1549 L253 1553 M255 1551 L259 1556 M252 1558 L260 1560" stroke="#555" stroke-width="1.2"/>
  <rect x="249" y="1549" width="2" height="13" fill="#7a8cc0"/>
  <path d="M247 1565 L231 1565 A17 17 0 0 0 247 1581 Z" fill="#2b2b2b"/>
  <path d="M233 1568 L246 1566 L246 1571 L236 1572 Z" fill="#9a9a9a"/>
  <path d="M249 1565 L265 1565 A17 17 0 0 1 249 1581 Z" fill="#eeeaf6"/>
  <ellipse cx="257" cy="1570" rx="7" ry="4" fill="#7256c4"/>
  <circle cx="254.5" cy="1570" r="1.5" fill="#fff"/><circle cx="259.5" cy="1570" r="1.5" fill="#fff"/>
  <rect x="236" y="1588" width="24" height="5" rx="2.5" fill="#1aa88a"/>
  <path d="M296 1549 L310 1549 L314 1553 L332 1553 L332 1582 L296 1582 Z" fill="#f6c93e"/>
  <path d="M296 1549 L310 1549 L314 1553 L332 1553 L332 1557 L296 1557 Z" fill="#e0a623"/>
  <rect x="302" y="1568" width="24" height="14" rx="3" fill="#1f7fd1"/>
  <rect x="309.5" y="1588" width="9" height="4" rx="2" fill="#8a8a8a"/>
  <path d="M364 1549 L368 1546 L396 1546 L396 1582 L368 1582 L364 1578 Z" fill="#d6154a"/>
  <rect x="368" y="1570" width="30" height="12" fill="#8b0b2d"/>
  <text x="381" y="1567" font-size="20" font-weight="bold" fill="#fff" text-anchor="middle">A</text>
  <text x="382" y="1580" font-size="8" font-weight="bold" fill="#fff" text-anchor="middle">MEC</text>
  <rect x="375.5" y="1588" width="9" height="4" rx="2" fill="#8a8a8a"/>
  <!-- tray -->
  <g stroke="#111" stroke-width="1.4" fill="none">
    <rect x="2211" y="1552" width="11" height="8"/><path d="M2210 1560 L2223 1560 L2223 1576 L2210 1576 Z"/>
    <path d="M2220 1574 L2223 1577 L2229 1569"/>
    <path d="M2301 1561 A20 20 0 0 1 2325 1561 M2305 1566 A14 14 0 0 1 2321 1566 M2309 1571 A8 8 0 0 1 2317 1571" stroke-width="1.8"/>
    <path d="M2339 1561 L2343 1561 L2349 1555 L2349 1574 L2343 1568 L2339 1568 Z M2353 1559 A7 7 0 0 1 2353 1570 M2357 1556 A12 12 0 0 1 2357 1573 M2361 1553 A17 17 0 0 1 2361 1576" stroke-width="1.6"/>
  </g>
  <circle cx="2314" cy="1570" r="2" fill="#111"/>
  <path d="M2260 1553 L2260 1575 M2250 1558 L2270 1558 L2270 1569 L2250 1569 Z" stroke="#111" stroke-width="1.6" fill="none"/>
  <g opacity="0.75">
    <rect x="2390" y="1530" width="10" height="47" fill="#6e7898"/>
    <rect x="2370" y="1533" width="20" height="4" fill="#7d87a3"/>
    <rect x="2372" y="1550" width="18" height="5" fill="#7d87a3"/>
    <rect x="2370" y="1567" width="20" height="4" fill="#7d87a3"/>
    <g fill="#7aa0d8">
      <rect x="2405" y="1530" width="37" height="9"/>
      <rect x="2405" y="1539" width="8" height="19"/>
      <rect x="2419" y="1545" width="23" height="6"/>
      <rect x="2405" y="1555" width="37" height="6"/>
      <rect x="2405" y="1561" width="8" height="16"/>
      <rect x="2431" y="1561" width="8" height="16"/>
    </g>
  </g>
  <rect x="2374" y="1557" width="21" height="14" rx="3" fill="#1a1f2a"/>
  <rect x="2395" y="1561" width="3" height="6" fill="#1a1f2a"/>
  <path d="M2378 1551 L2374 1560 L2380 1560 L2377 1568" stroke="#fff" stroke-width="1.5" fill="none"/>
  <text x="2446" y="1549" font-size="11" font-weight="bold" fill="#8a8f99" opacity="0.8">HIFI168.com</text>
  <text x="2446" y="1575" font-size="26" fill="#b9bcc2" opacity="0.55">发烧网</text>
  <text x="2453" y="1558" font-size="17" fill="#111">10:56</text>
  <text x="2423" y="1582" font-size="17" fill="#111">2025/2/9</text>
  <path d="M2512 1572 C2512 1558 2526 1558 2526 1572 L2528 1575 L2510 1575 Z" stroke="#111" stroke-width="1.4" fill="none"/>
  <text x="2518" y="1566" font-size="9" fill="#111">z</text>
</svg>

<!-- menu -->
<div class="t menu" style="left:17px">文件(F)</div>
<div class="t menu" style="left:106px">编辑(E)</div>
<div class="t menu" style="left:192px">视图(V)</div>
<div class="t menu" style="left:283px">插入(I)</div>
<div class="t menu" style="left:366px">格式(O)</div>
<div class="t menu" style="left:459px">工具(T)</div>
<div class="t menu" style="left:546px">绘制(D)</div>
<div class="t menu" style="left:639px">注释(N)</div>
<div class="t menu" style="left:732px">修改(M)</div>
<div class="t menu" style="left:828px">工具集(C)</div>
<div class="t menu" style="left:936px">结构(S)</div>
<div class="t menu" style="left:1024px">参数化(P)</div>
<div class="t menu" style="left:1130px">窗口(W)</div>
<div class="t menu" style="left:1226px">帮助(H)</div>
<div class="t menu" style="left:1318px">Express</div>

<!-- ribbon tabs -->
<div class="a" style="left:1052px;top:80px;width:135px;height:30px;background:#1f96d8"></div>
<div class="t rt" style="left:21px">常用</div>
<div class="t rt" style="left:88px">插入</div>
<div class="t rt" style="left:153px">注释</div>
<div class="t rt" style="left:220px">参数化</div>
<div class="t rt" style="left:305px">工具集</div>
<div class="t rt" style="left:388px">视图</div>
<div class="t rt" style="left:454px">管理</div>
<div class="t rt" style="left:519px">输出</div>
<div class="t rt" style="left:585px">结构</div>
<div class="t rt" style="left:652px">附加模块</div>
<div class="t rt" style="left:753px">协作</div>
<div class="t rt" style="left:820px">Express Tools</div>
<div class="t rt" style="left:963px">精选应用</div>
<div class="t rt" style="left:1066px;color:#fff">增强尺寸标注</div>


<!-- ribbon panel content -->
<svg class="a" style="left:0;top:110px" width="1800" height="156" viewBox="0 110 1800 156" font-family="Liberation Sans">
  <!-- panel 1 -->
  <text x="37" y="145" font-size="15" fill="#7a8391" text-anchor="middle">ØXX</text>
  <line x1="14" y1="150" x2="60" y2="150" stroke="#7a8391" stroke-width="1.2"/>
  <text x="37" y="167" font-size="15" fill="#7a8391" text-anchor="middle">MMC</text>
  <text x="34" y="199" font-size="19" fill="#7a8391" text-anchor="middle">预定义</text>
  <path d="M31 207 L39 207 L35 211 Z" fill="#8a929e"/>
  <line x1="85" y1="138" x2="85" y2="170" stroke="#7a8391" stroke-width="1.2"/>
  <line x1="88" y1="147" x2="117" y2="147" stroke="#7a8391" stroke-width="1.2"/>
  <path d="M86 147 L92 144 L92 150 Z M118 147 L112 144 L112 150 Z" fill="#7a8391"/>
  <text x="103" y="142" font-size="14" fill="#7a8391" text-anchor="middle">X</text>
  <path d="M110 132 L128 132 M110 132 L115 128 M110 132 L115 136" stroke="#7a8391" stroke-width="2" fill="none"/>
  <path d="M108 162 L120 151 L130 161 L118 172 Z" fill="#7a8391"/>
  <rect x="122" y="149" width="8" height="6" fill="#7a8391" transform="rotate(45 126 152)"/>
  <text x="107" y="199" font-size="19" fill="#7a8391" text-anchor="middle">复制自</text>
  <path d="M103 209 L111 209 L107 213 Z" fill="#8a929e"/>
  <!-- panel 2 -->
  <line x1="164" y1="127" x2="164" y2="174" stroke="#e6e8eb" stroke-width="1.3"/>
  <line x1="211" y1="127" x2="211" y2="174" stroke="#e6e8eb" stroke-width="1.3"/>
  <line x1="166" y1="136" x2="209" y2="136" stroke="#e6e8eb" stroke-width="1.3"/>
  <path d="M165 136 L171 133 L171 139 Z M210 136 L204 133 L204 139 Z" fill="#e6e8eb"/>
  <path d="M178 161 L185 168 L198 155" stroke="#3fbf6a" stroke-width="4" fill="none"/>
  <text x="187" y="200" font-size="19" fill="#f0f2f5" text-anchor="middle">检验</text>
  <text x="235" y="146" font-size="16" fill="#e6e8eb" text-anchor="middle">(xx)</text>
  <rect x="223" y="167" width="24" height="16" fill="#d0d3d8"/>
  <text x="235" y="181" font-size="15" fill="#4b5260" text-anchor="middle">XX</text>
  <text x="235" y="219" font-size="16" fill="#e6e8eb" text-anchor="middle">XX</text>
  <line x1="224" y1="222" x2="246" y2="222" stroke="#e6e8eb" stroke-width="1.2"/>
  <!-- panel 3 -->
  <rect x="261" y="142" width="34" height="32" fill="#4a5466" stroke="#5c8fc3" stroke-width="2"/>
  <text x="278" y="164" font-size="14" fill="#8d96a3" text-anchor="middle">XX</text>
  <text x="312" y="163" font-size="13" font-weight="bold" fill="#c8d6e6" text-anchor="middle">x.xx</text>
  <rect x="328" y="144" width="87" height="30" fill="#2c333e"/>
  <rect x="329" y="145" width="72" height="28" fill="#4b5566"/>
  <text x="334" y="167" font-size="18" fill="#f0f2f5">8</text>
  <path d="M403 152 L412 152 L407.5 146 Z M403 162 L412 162 L407.5 168 Z" fill="#d0d3d8"/>
  <text x="278" y="201" font-size="15" fill="#7a8391" text-anchor="middle">[xx]</text>
  <text x="312" y="200" font-size="13" fill="#7a8391" text-anchor="middle">[x.xx]</text>
  <rect x="328" y="180" width="87" height="30" fill="#2c333e"/>
  <rect x="329" y="181" width="85" height="28" fill="#454e5e"/>
  <text x="334" y="203" font-size="18" fill="#8a929e">2</text>
  <path d="M403 189 L412 189 L407.5 184 Z M403 197 L412 197 L407.5 202 Z" fill="#6c7480"/>
  <!-- panel 4 -->
  <line x1="442" y1="150" x2="442" y2="172" stroke="#7a8391" stroke-width="1.3"/>
  <line x1="487" y1="150" x2="487" y2="172" stroke="#7a8391" stroke-width="1.3"/>
  <line x1="444" y1="160" x2="485" y2="160" stroke="#7a8391" stroke-width="1.3"/>
  <path d="M443 160 L449 157 L449 163 Z M486 160 L480 157 L480 163 Z" fill="#7a8391"/>
  <text x="455" y="156" font-size="24" font-weight="bold" font-style="italic" fill="#7a8391">A</text>
  <path d="M470 154 L488 136 L494 142 L476 160 L468 162 Z" fill="#7a8391"/>
  <text x="465" y="200" font-size="19" fill="#7a8391" text-anchor="middle">编辑</text>
  <text x="466" y="224" font-size="19" fill="#7a8391" text-anchor="middle">标注文字</text>
  <!-- panel 5 -->
  <rect x="514" y="135" width="220" height="48" fill="#363e4b"/>
  <g fill="#3b4452"><rect x="515" y="136" width="47" height="46"/><rect x="566" y="136" width="48" height="46"/><rect x="617" y="136" width="48" height="46"/><rect x="668" y="136" width="47" height="46"/></g>
  <g stroke="#858e9b" stroke-width="1.7" fill="none">
    <circle cx="539" cy="162" r="10.5"/><line x1="532" y1="178" x2="546" y2="146"/>
    <circle cx="589.5" cy="162" r="17"/>
    <circle cx="640.5" cy="162" r="17"/>
    <circle cx="691.5" cy="162" r="17"/>
    <path d="M583 171 L583 154 L589.5 168 L596 154 L596 171"/>
    <path d="M645 154 L635 154 L635 170 L645 170 M635 162 L644 162"/>
    <path d="M686 171 L686 154 L693 154 C699 154 699 163 693 163 L686 163"/>
  </g>
  <path d="M721 157 L729 157 L725 161 Z" fill="#7a8391"/>
  <text x="519" y="202" font-size="9" fill="#7a8391">X A</text>
  <text x="519" y="214" font-size="9" fill="#7a8391">A</text>
  <path d="M528 207 L536 207 M528 211 L536 211" stroke="#7a8391" stroke-width="1"/>
  <text x="550" y="212" font-size="19" fill="#7a8391">沿尺寸线换行</text>
  <!-- panel 6 -->
  <text x="751" y="149" font-size="21" fill="#f0f2f5">X</text>
  <text x="765" y="149" font-size="11" fill="#8fb7d9">h7</text>
  <text x="782" y="149" font-size="19" fill="#f0f2f5">配合</text>
  <rect x="745" y="163" width="4" height="23" fill="#7a8391"/>
  <text x="753" y="181" font-size="10" fill="#5f7e9c">|H7</text>
  <text x="773" y="183" font-size="19" fill="#7a8391">符号:</text>
  <rect x="866" y="160" width="74" height="32" fill="#363e4b" stroke="#2c333e" stroke-width="1.5"/>
  <path d="M926 174 L936 174 L931 179 Z" fill="#c9ced6"/>
  <rect x="943" y="124" width="142" height="68" fill="#454e5e" stroke="#363e4b" stroke-width="1.5"/>
  <text x="985" y="148" font-size="11" font-weight="bold" fill="#3d8fd0">+0.0100</text>
  <text x="977" y="164" font-size="17" font-weight="bold" fill="#3d8fd0">60</text>
  <text x="993" y="165" font-size="11" font-weight="bold" fill="#3d8fd0">-0.0010</text>
  <line x1="948" y1="170" x2="1063" y2="170" stroke="#2fa24a" stroke-width="1.5"/>
  <path d="M1069 155 L1079 155 L1074 160 Z" fill="#c9ced6"/>
  <text x="1016" y="220" font-size="19" fill="#7a8391" text-anchor="middle">表示法</text>
  <line x1="1099" y1="121" x2="1099" y2="230" stroke="#2b313b" stroke-width="2"/>
  <text x="1114" y="149" font-size="21" fill="#f0f2f5">X</text>
  <text x="1128" y="149" font-size="11" fill="#8fb7d9">±1</text>
  <text x="1146" y="149" font-size="19" fill="#f0f2f5">公差</text>
  <rect x="1109" y="163" width="4" height="24" fill="#7a8391"/>
  <text x="1118" y="174" font-size="9" fill="#5f7e9c">+X</text>
  <text x="1118" y="185" font-size="9" fill="#5f7e9c">-X</text>
  <text x="1136" y="184" font-size="19" fill="#7a8391">上限:</text>
  <rect x="1109" y="199" width="4" height="24" fill="#7a8391"/>
  <text x="1118" y="210" font-size="9" fill="#5f7e9c">+X</text>
  <text x="1118" y="221" font-size="9" fill="#5f7e9c">-X</text>
  <text x="1136" y="220" font-size="19" fill="#7a8391">下限:</text>
  <rect x="1228" y="159" width="74" height="33" fill="#454e5e" stroke="#2c333e" stroke-width="2"/>
  <text x="1235" y="183" font-size="17" fill="#a8afba">0.1</text>
  <rect x="1228" y="195" width="74" height="33" fill="#454e5e" stroke="#2c333e" stroke-width="2"/>
  <text x="1234" y="219" font-size="17" fill="#a8afba">-0.1</text>
  <rect x="1306" y="124" width="142" height="68" fill="#454e5e" stroke="#363e4b" stroke-width="1.5"/>
  <text x="1368" y="155" font-size="11" font-weight="bold" fill="#3d8fd0" text-anchor="middle">60.0100</text>
  <text x="1368" y="166" font-size="11" font-weight="bold" fill="#3d8fd0" text-anchor="middle">59.9990</text>
  <line x1="1311" y1="170" x2="1426" y2="170" stroke="#2fa24a" stroke-width="1.5"/>
  <path d="M1433 155 L1443 155 L1438 160 Z" fill="#c9ced6"/>
  <text x="1380" y="220" font-size="19" fill="#7a8391" text-anchor="middle">方式</text>
  <!-- panel 7 -->
  <g stroke="#7a8391" stroke-width="1.3" fill="none">
    <path d="M1472 165 L1472 172 M1494 165 L1494 172 M1472 168 L1494 168"/>
    <path d="M1486 150 L1488 150 L1488 157"/>
    <path d="M1507 146 L1529 168 M1527 165 L1520 172"/>
    <path d="M1472 196 L1494 196 M1494 190 L1494 205 M1485 198 L1485 206"/>
    <path d="M1505 202 L1511 185 M1512 191 L1524 191 M1529 185 L1523 202"/>
  </g>
  <text x="1474" y="155" font-size="11" fill="#7a8391">X</text>
  <text x="1480" y="172" font-size="9" fill="#7a8391">X</text>
  <text x="1516" y="156" font-size="11" fill="#7a8391">X</text>
  <text x="1473" y="189" font-size="10" fill="#7a8391">2X</text>
  <rect x="1533" y="142" width="59" height="32" fill="#454e5e" stroke="#2c333e" stroke-width="2"/>
  <text x="1540" y="166" font-size="18" fill="#a8afba">0</text>
  <rect x="1533" y="178" width="59" height="32" fill="#454e5e" stroke="#2c333e" stroke-width="2"/>
  <text x="1540" y="202" font-size="18" fill="#a8afba">0</text>
  <g stroke="#7a8391" stroke-width="1.3"><line x1="1610" y1="128" x2="1610" y2="173"/><line x1="1655" y1="128" x2="1655" y2="173"/><line x1="1612" y1="136" x2="1653" y2="136"/></g>
  <path d="M1611 136 L1617 133 L1617 139 Z M1654 136 L1648 133 L1648 139 Z" fill="#7a8391"/>
  <path d="M1634 166 L1651 150 L1657 156 L1640 172 L1632 174 Z" fill="#7a8391"/>
  <text x="1634" y="200" font-size="19" fill="#7a8391" text-anchor="middle">编辑</text>
  <text x="1634" y="224" font-size="19" fill="#7a8391" text-anchor="middle">几何图形</text>
  <!-- panel 8 -->
  <path d="M1692 155 L1708 168 L1737 136 L1730 132 L1707 156 L1697 148 Z" fill="#6f7784"/>
  <text x="1715" y="200" font-size="19" fill="#7a8391" text-anchor="middle">关闭</text>
  <text x="1715" y="224" font-size="19" fill="#7a8391" text-anchor="middle">编辑器</text>
</svg>

<!-- file tabs -->
<svg class="a" style="left:0;top:266px" width="400" height="41" viewBox="0 266 400 41">
  <rect x="25" y="280" width="24" height="3" fill="#e6e8eb"/>
  <rect x="25" y="288" width="24" height="3" fill="#e6e8eb"/>
  <rect x="25" y="296" width="24" height="3" fill="#e6e8eb"/>
  <line x1="74" y1="277" x2="65" y2="301" stroke="#4d5563" stroke-width="1.5"/>
  <path d="M150 270 L247 270 L234 307 L136 307 Z" fill="#3b4452"/>
  <line x1="309" y1="277" x2="300" y2="301" stroke="#4d5563" stroke-width="1.5"/>
  <path d="M218 283 L228 293 M228 283 L218 293" stroke="#c9ced6" stroke-width="2.5"/>
  <path d="M273 278 L273 299 M262 288.5 L284 288.5" stroke="#e6e8eb" stroke-width="3"/>
</svg>
<div class="t" style="left:88px;top:279px;font-size:20px;color:#e6e8eb">开始</div>
<div class="t" style="left:160px;top:280px;font-size:20px;color:#f4f5f7;font-weight:bold">ffyx*</div>
<div class="t" style="left:4px;top:321px;font-size:19px;color:#222">[−][俯视][二维线框]</div>

<!-- panel separators -->
<div class="sep" style="left:155px"></div>
<div class="sep" style="left:257px"></div>
<div class="sep" style="left:421px"></div>
<div class="sep" style="left:509px"></div>
<div class="sep" style="left:738px"></div>
<div class="sep" style="left:1459px"></div>
<div class="sep" style="left:1679px"></div>

<!-- panel titles -->
<div class="t pt" style="left:42px">重复使用</div>
<div class="t pt" style="left:169px">表示法<svg width="12" height="8" style="margin-left:9px;vertical-align:2px"><path d="M0 1 L12 1 L6 7 Z" fill="#e6e8eb"/></svg></div>
<div class="t pt" style="left:293px">标注文字<svg width="12" height="8" style="margin-left:9px;vertical-align:2px"><path d="M0 1 L12 1 L6 7 Z" fill="#e6e8eb"/></svg></div>
<div class="t pt" style="left:444px">编辑</div>
<div class="t pt" style="left:605px">插入</div>
<div class="t pt" style="left:1048px">配合/公差<svg width="12" height="8" style="margin-left:9px;vertical-align:2px"><path d="M0 1 L12 1 L6 7 Z" fill="#e6e8eb"/></svg></div>
<div class="t pt" style="left:1540px">格式<svg width="12" height="8" style="margin-left:9px;vertical-align:2px"><path d="M0 1 L12 1 L6 7 Z" fill="#e6e8eb"/></svg></div>
<div class="t pt" style="left:1697px">关闭</div>

</body></html>
